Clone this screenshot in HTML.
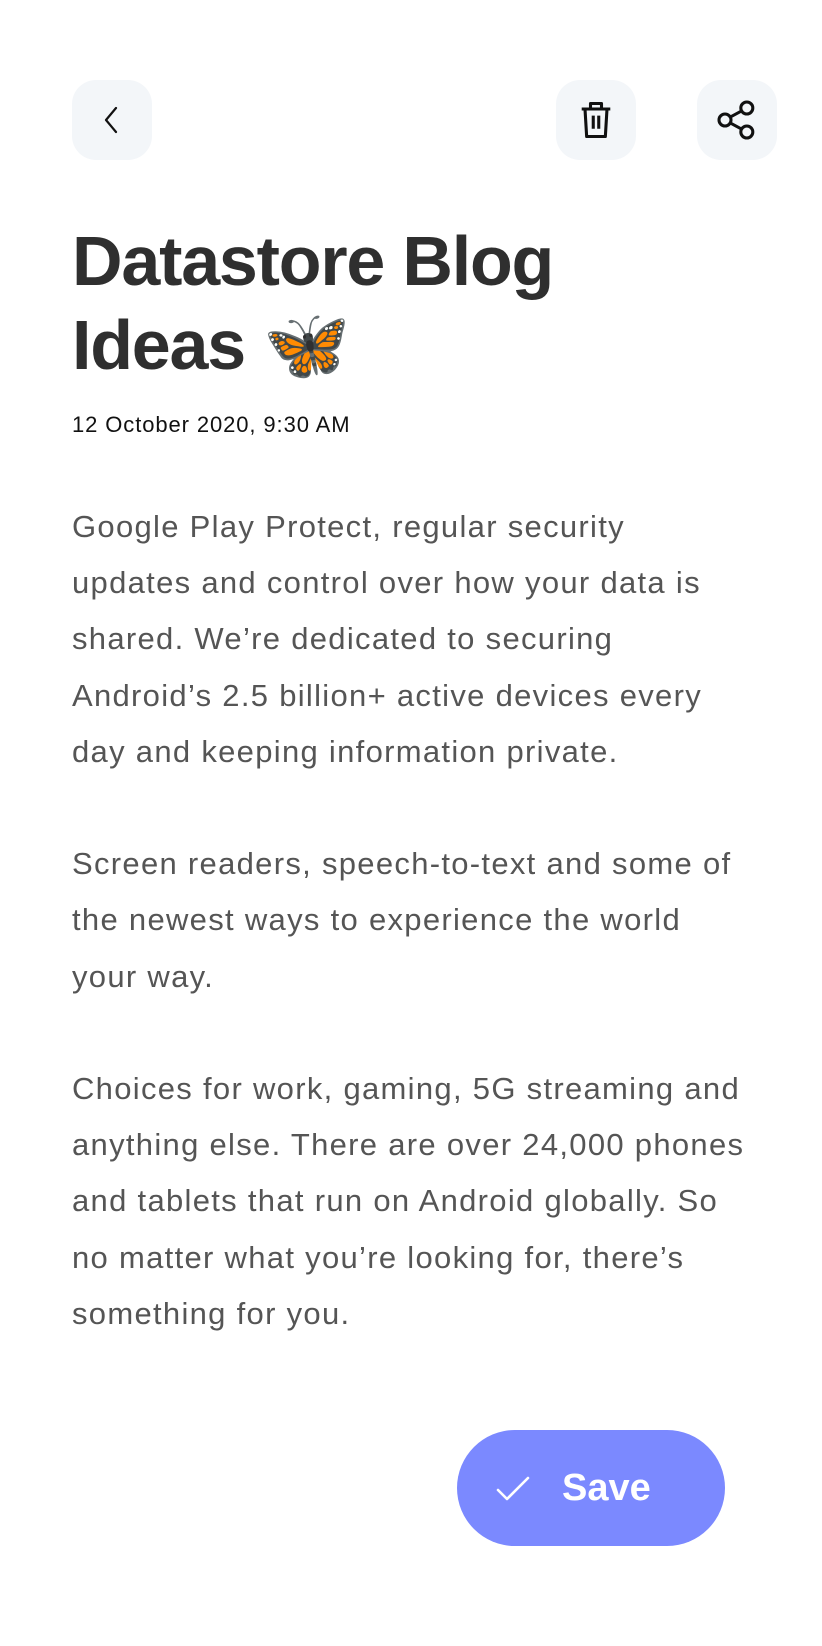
<!DOCTYPE html>
<html><head><meta charset="utf-8"><style>
*{margin:0;padding:0;box-sizing:border-box}
html,body{width:822px;height:1646px;background:#fff;overflow:hidden}
body{position:relative;font-family:"Liberation Sans",sans-serif}
.btn{position:absolute;top:80px;width:80px;height:80px;border-radius:24px;background:#f3f6f9;display:flex;align-items:center;justify-content:center}
h1{position:absolute;left:72px;top:219px;font-size:70px;line-height:84px;font-weight:700;color:#2f2f2f;letter-spacing:-1.2px}
.date{position:absolute;left:72px;top:412px;font-size:22px;color:#111;letter-spacing:0.9px}
.body{position:absolute;left:72px;top:499px;font-size:31px;line-height:56.2px;color:#555;letter-spacing:1.3px;white-space:nowrap}
.save{position:absolute;left:457px;top:1430px;width:268px;height:116px;border-radius:58px;background:#7b89ff;color:#fff}
.save span{position:absolute;left:105px;top:36px;font-size:38px;font-weight:700;line-height:44px}
</style></head><body>
<div class="btn" style="left:72px"><svg width="36" height="36" viewBox="0 0 36 36"><path d="M22 6 L12 18 L22 30" fill="none" stroke="#111" stroke-width="2.2" stroke-linecap="round" stroke-linejoin="round"/></svg></div>
<div class="btn" style="left:556px"><svg width="44" height="44" viewBox="0 0 40 40" fill="none" stroke="#111" stroke-width="2.8" stroke-linejoin="round"><path d="M7 10 H33"/><path d="M15 10 V5 H25 V10"/><path d="M10 10 L11.5 35 H28.5 L30 10"/><path d="M17.5 16 V28 M22.5 16 V28"/></svg></div>
<div class="btn" style="left:697px"><svg width="48" height="48" viewBox="0 0 44 44" fill="none" stroke="#111" stroke-width="2.8"><circle cx="31" cy="11" r="5.5"/><circle cx="11" cy="22" r="5.5"/><circle cx="31" cy="33" r="5.5"/><path d="M15.8 19.3 L26.2 13.7 M15.8 24.7 L26.2 30.3"/></svg></div>
<h1>Datastore Blog<br>Ideas 🦋</h1>
<div class="date">12 October 2020, 9:30 AM</div>
<div class="body">Google Play Protect, regular security<br>updates and control over how your data is<br>shared. We’re dedicated to securing<br>Android’s 2.5 billion+ active devices every<br>day and keeping information private.<br><br>Screen readers, speech-to-text and some of<br>the newest ways to experience the world<br>your way.<br><br>Choices for work, gaming, 5G streaming and<br>anything else. There are over 24,000 phones<br>and tablets that run on Android globally. So<br>no matter what you’re looking for, there’s<br>something for you.</div>
<div class="save"><svg style="position:absolute;left:38px;top:40px" width="36" height="36" viewBox="0 0 36 36"><path d="M3 20 L12 29 L33 8" fill="none" stroke="#fff" stroke-width="2.6" stroke-linecap="round" stroke-linejoin="round"/></svg><span>Save</span></div>
</body></html>
